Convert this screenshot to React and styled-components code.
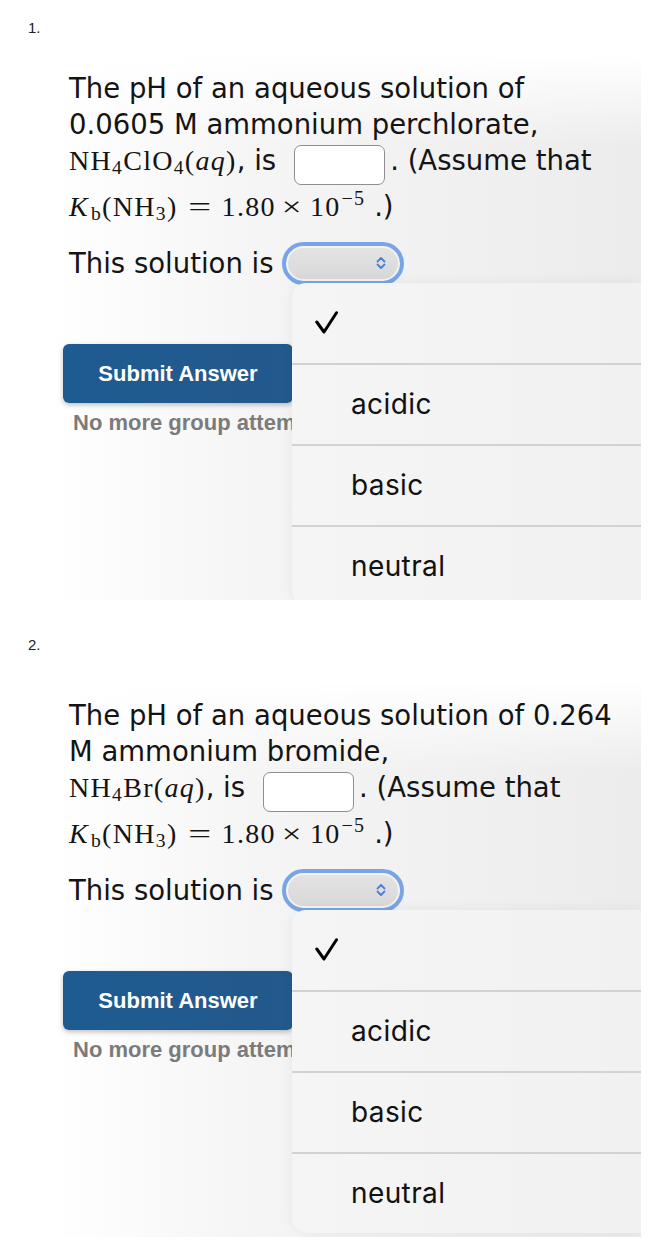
import React from 'react'
import styled, { createGlobalStyle } from 'styled-components'

const GlobalStyle = createGlobalStyle`
  html, body {
    margin: 0;
    padding: 0;
    background: #ffffff;
  }
  body {
    font-family: "DejaVu Sans", Verdana, sans-serif;
    color: #141414;
  }
`

const Page = styled.div`
  width: 648px;
  height: 1243px;
  overflow: hidden;
  padding-top: 19px;
  box-sizing: border-box;
`

const Number = styled.div`
  margin: ${p => p.$top}px 0 ${p => p.$bottom}px 28px;
  font-family: "Liberation Sans", Arial, sans-serif;
  font-size: 15px;
  line-height: 18px;
  color: #222;
`

const Card = styled.div`
  position: relative;
  margin-left: 50px;
  width: 591px;
  height: ${p => p.$h}px;
  overflow: hidden;
  box-sizing: border-box;
  padding: 15px 0 0 19px;
  background:
    linear-gradient(180deg, #ffffff 0, rgba(255, 255, 255, 0) 90px),
    linear-gradient(90deg, #ffffff 0%, #f5f5f5 35%, #ececec 100%);
`

const PromptLine = styled.div`
  height: 36px;
  margin-top: ${p => p.$gap || 0}px;
  font-size: 27.5px;
  line-height: 36px;
  white-space: nowrap;
`

const Math = styled.span`
  font-family: "Liberation Serif", "Times New Roman", serif;
  font-size: 28px;
  letter-spacing: 1.3px;
  line-height: 1;
`

const I = styled.i`
  font-style: italic;
  margin-right: ${p => p.$kern || 0}px;
`

const Sub = styled.span`
  font-size: 0.7em;
  line-height: 0;
  vertical-align: -0.2em;
`

const Sup = styled.span`
  font-size: 20px;
  line-height: 0;
  vertical-align: 11px;
  margin-left: 1px;
`

const Op = styled.span`
  display: inline-block;
  margin: 0 ${p => p.$right}px 0 ${p => p.$left}px;
  transform: scaleX(${p => p.$scale || 1});
`

const AnswerBox = styled.span`
  display: inline-block;
  width: 91px;
  height: 40px;
  box-sizing: border-box;
  margin: -5px 5px -6px ${p => p.$left}px;
  vertical-align: -9px;
  border: 1.5px solid #8e8e8e;
  border-radius: 7px;
  background: #ffffff;
`

const SelectRow = styled.div`
  display: flex;
  align-items: center;
  gap: 8px;
  height: 44px;
  margin-top: 17px;
  font-size: 27.5px;
`

const SelectRing = styled.div`
  width: 122px;
  height: 43px;
  box-sizing: border-box;
  border: 4px solid #79a5e6;
  border-radius: 22px;
  padding: 2px;
  background: #f3f3f3;
`

const SelectFill = styled.div`
  height: 100%;
  border-radius: 16px;
  background: linear-gradient(180deg, #e3e3e3, #d8d8d8);
  display: flex;
  align-items: center;
  justify-content: flex-end;
  padding-right: 12px;
`

const SubmitButton = styled.button`
  display: block;
  margin: 59px 0 0 -6px;
  width: 230px;
  height: 59px;
  border: none;
  border-radius: 6px;
  background: linear-gradient(90deg, #1e5b91 0%, #23598c 100%);
  box-shadow: 0 2px 5px rgba(0, 0, 0, 0.25);
  color: #ffffff;
  font-family: "Liberation Sans", Arial, sans-serif;
  font-weight: 700;
  font-size: 22px;
`

const Note = styled.div`
  width: 219px;
  overflow: hidden;
  margin: 8px 0 0 4px;
  font-family: "Liberation Sans", Arial, sans-serif;
  font-weight: 700;
  font-size: 22px;
  line-height: 24px;
  color: #7b7b7b;
  white-space: nowrap;
`

const Menu = styled.div`
  position: absolute;
  top: 228px;
  left: 242px;
  right: 0;
  height: 323px;
  background: linear-gradient(90deg, #f5f5f5, #f1f1f1);
  border-radius: 14px 0 0 16px;
  box-shadow: 0 0 14px rgba(0, 0, 0, 0.06);
  display: flex;
  flex-direction: column;
`

const MenuRow = styled.div`
  display: flex;
  align-items: center;
  height: ${p => (p.$first ? 80 : 79.5)}px;
  padding-left: 23px;
  border-top: ${p => (p.$first ? 'none' : '2px solid #d2d2d2')};
  font-family: Inter, "Noto Sans", sans-serif;
  font-size: 28px;
  letter-spacing: 0.4px;
  color: #111;
`

const IconSlot = styled.span`
  width: 36px;
  display: flex;
  align-items: center;
`

function Chevrons() {
  return (
    <svg width="10" height="14" viewBox="0 0 10 14" fill="none">
      <path d="M1.5 5.5 L5 2 L8.5 5.5" stroke="#4b80d8" strokeWidth="1.8" strokeLinecap="round" strokeLinejoin="round" />
      <path d="M1.5 8.5 L5 12 L8.5 8.5" stroke="#4b80d8" strokeWidth="1.8" strokeLinecap="round" strokeLinejoin="round" />
    </svg>
  )
}

function Check() {
  return (
    <svg width="23" height="23" viewBox="0 0 23 23" fill="none">
      <path d="M1.8 11 L9 21 L21.5 1.8" stroke="#000" strokeWidth="3" strokeLinecap="round" strokeLinejoin="round" />
    </svg>
  )
}

function Kb() {
  return (
    <Math>
      <I $kern={2}>K</I><Sub>b</Sub>(NH<Sub>3</Sub>)
      <Op $left={14} $right={13} $scale={1.45}>=</Op>1.80
      <Op $left={8} $right={9} $scale={1.25}>×</Op>10<Sup>−5</Sup>
    </Math>
  )
}

function Question({ number, numTop, numBottom, cardHeight, lines, formula, boxGap }) {
  return (
    <>
      <Number $top={numTop} $bottom={numBottom}>{number}.</Number>
      <Card $h={cardHeight}>
        {lines.map(line => (
          <PromptLine key={line}>{line}</PromptLine>
        ))}
        <PromptLine>
          {formula}, is<AnswerBox $left={boxGap} />. (Assume that
        </PromptLine>
        <PromptLine $gap={10}>
          <Kb /> .)
        </PromptLine>
        <SelectRow>
          This solution is
          <SelectRing>
            <SelectFill><Chevrons /></SelectFill>
          </SelectRing>
        </SelectRow>
        <SubmitButton>Submit Answer</SubmitButton>
        <Note>No more group attempts remain</Note>
        <Menu>
          <MenuRow $first><IconSlot><Check /></IconSlot></MenuRow>
          <MenuRow><IconSlot />acidic</MenuRow>
          <MenuRow><IconSlot />basic</MenuRow>
          <MenuRow><IconSlot />neutral</MenuRow>
        </Menu>
      </Card>
    </>
  )
}

export default function App() {
  return (
    <>
      <GlobalStyle />
      <Page>
        <Question
          number={1}
          numTop={0}
          numBottom={18}
          cardHeight={545}
          lines={['The pH of an aqueous solution of', '0.0605 M ammonium perchlorate,']}
          formula={<Math>NH<Sub>4</Sub>ClO<Sub>4</Sub>(<I>aq</I>)</Math>}
          boxGap={18}
        />
        <Question
          number={2}
          numTop={36}
          numBottom={28}
          cardHeight={555}
          lines={['The pH of an aqueous solution of 0.264', 'M ammonium bromide,']}
          formula={<Math>NH<Sub>4</Sub>Br(<I>aq</I>)</Math>}
          boxGap={18}
        />
      </Page>
    </>
  )
}
